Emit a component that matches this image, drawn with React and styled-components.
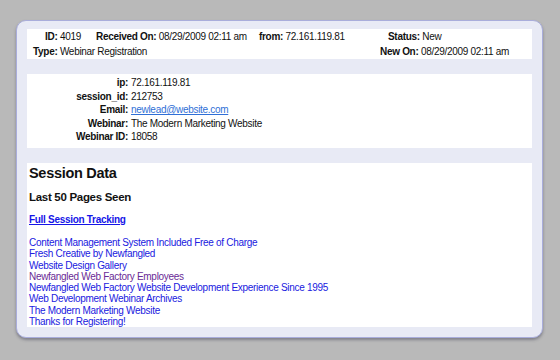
import React from "react";
import styled, { createGlobalStyle } from "styled-components";

const GlobalStyle = createGlobalStyle`
body {
  margin: 0;
  background: #b9b9b9;
  font-family: "Liberation Sans", Arial, sans-serif;
  font-size: 10px;
  letter-spacing: -0.3px;
  color: #111;
}
`;

const Page = styled.div`
width: 560px;
height: 360px;
padding: 20px 0 0 16px;
box-sizing: border-box;
`;

const Card = styled.div`
width: 527px;
height: 318px;
box-sizing: border-box;
background: #e8eaf5;
border: 1px solid #a9addb;
border-radius: 10px;
box-shadow: 0 2px 3px rgba(60, 60, 80, 0.45);
padding: 8px 10px 10px;
display: flex;
flex-direction: column;
gap: 15px;
`;

const Panel = styled.div`
background: #fff;
height: ${p => p.$h ? p.$h + "px" : "auto"};
flex: ${p => p.$grow ? 1 : "none"};
box-sizing: border-box;
padding: ${p => p.$pad || "0"};
`;

const HeadRow = styled.div`
display: flex;
height: 14.5px;
line-height: 14.5px;
padding-left: ${p => p.$indent}px;
white-space: nowrap;
`;

const HeadCell = styled.div`
width: ${p => p.$w ? p.$w + "px" : "auto"};
flex: none;
`;

const B = styled.b`
font-weight: bold;
`;

const DetailRow = styled.div`
display: flex;
height: 13.5px;
line-height: 13.5px;
white-space: nowrap;
`;

const DetailLabel = styled.div`
width: 101px;
text-align: right;
font-weight: bold;
padding-right: 3px;
`;

const Mail = styled.a`
color: #2f6fd6;
text-decoration: underline;
`;

const Title = styled.h2`
margin: 0;
font-size: 14.5px;
line-height: 18px;
font-weight: bold;
padding: 0 0 0 2px;
`;

const SubTitle = styled.h3`
margin: 8px 0 0;
font-size: 11.5px;
line-height: 15px;
font-weight: bold;
padding-left: 2px;
`;

const TrackLink = styled.a`
display: block;
margin: 8px 0 0 2px;
font-weight: bold;
color: #1515e8;
text-decoration: underline;
line-height: 13px;
`;

const PageList = styled.div`
margin: 11px 0 0 2px;
display: flex;
flex-direction: column;
`;

const PageLink = styled.a`
color: ${p => p.$visited ? "#6a2a95" : "#2020e0"};
text-decoration: none;
line-height: 11.3px;
height: 11.3px;
white-space: nowrap;
`;

const details = [
  ["ip:", "72.161.119.81"],
  ["session_id:", "212753"],
  ["Email:", "newlead@website.com", true],
  ["Webinar:", "The Modern Marketing Website"],
  ["Webinar ID:", "18058"],
];

const pages = [
  ["Content Management System Included Free of Charge"],
  ["Fresh Creative by Newfangled"],
  ["Website Design Gallery"],
  ["Newfangled Web Factory Employees", true],
  ["Newfangled Web Factory Website Development Experience Since 1995"],
  ["Web Development Webinar Archives"],
  ["The Modern Marketing Website"],
  ["Thanks for Registering!"],
];

export default function App() {
  return (
    <Page>
      <GlobalStyle />
      <Card>
        <Panel $h={30} $pad="1px 0 0">
          <HeadRow $indent={18}>
            <HeadCell $w={51}><B>ID:</B> 4019</HeadCell>
            <HeadCell $w={163}><B>Received On:</B> 08/29/2009 02:11 am</HeadCell>
            <HeadCell $w={129}><B>from:</B> 72.161.119.81</HeadCell>
            <HeadCell><B>Status:</B> New</HeadCell>
          </HeadRow>
          <HeadRow $indent={6}>
            <HeadCell $w={347}><B>Type:</B> Webinar Registration</HeadCell>
            <HeadCell><B>New On:</B> 08/29/2009 02:11 am</HeadCell>
          </HeadRow>
        </Panel>
        <Panel $h={74} $pad="2px 0 0">
          {details.map(([k, v, mail]) => (
            <DetailRow key={k}>
              <DetailLabel>{k}</DetailLabel>
              {mail ? <Mail href="#">{v}</Mail> : <span>{v}</span>}
            </DetailRow>
          ))}
        </Panel>
        <Panel $grow $pad="1px 0 0">
          <Title>Session Data</Title>
          <SubTitle>Last 50 Pages Seen</SubTitle>
          <TrackLink href="#">Full Session Tracking</TrackLink>
          <PageList>
            {pages.map(([t, visited]) => (
              <PageLink key={t} href="#" $visited={visited}>{t}</PageLink>
            ))}
          </PageList>
        </Panel>
      </Card>
    </Page>
  );
}
